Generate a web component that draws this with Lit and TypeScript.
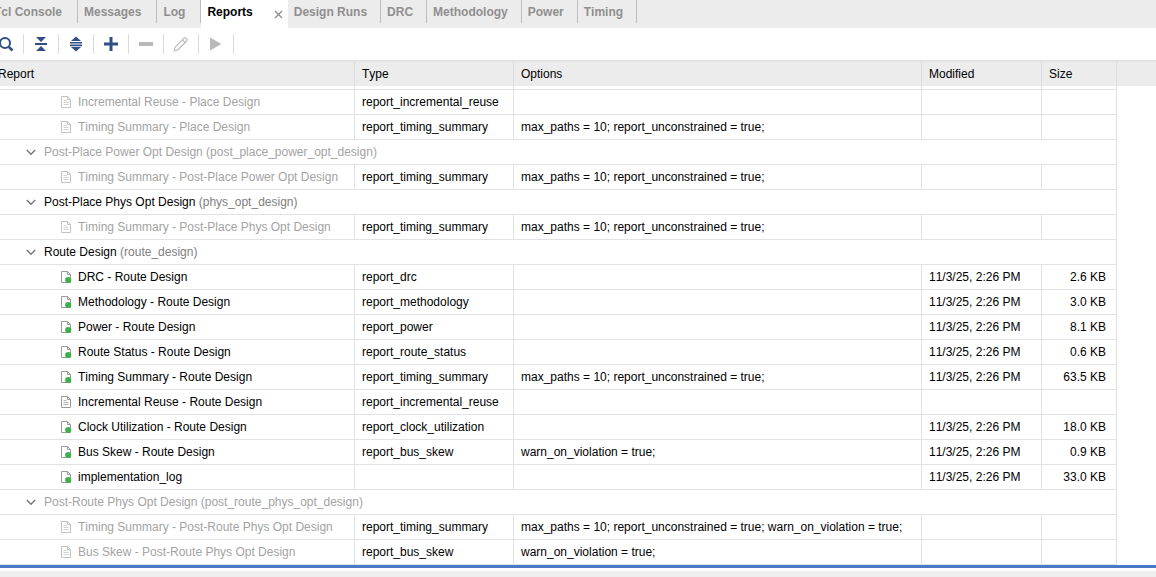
import { LitElement, html, css, svg, nothing } from "lit";
import { customElement, property, state } from "lit/decorators.js";
import { classMap } from "lit/directives/class-map.js";

type Status = "done" | "pending" | "off";

interface Report {
  name: string;
  type: string;
  options?: string;
  modified?: string;
  size?: string;
  status: Status;
}

interface Group {
  name: string;
  step: string;
  off?: boolean;
  reports: Report[];
}

const PATHS = "max_paths = 10; report_unconstrained = true;";
const WARN = "warn_on_violation = true;";
const WHEN = "11/3/25, 2:26 PM";

const done = (name: string, type: string, size: string, options = ""): Report => ({
  name, type, size, options, modified: WHEN, status: "done",
});
const off = (name: string, type: string, options = ""): Report => ({
  name, type, options, status: "off",
});

const LEADING: Report[] = [
  off("Incremental Reuse - Place Design", "report_incremental_reuse"),
  off("Timing Summary - Place Design", "report_timing_summary", PATHS),
];

const GROUPS: Group[] = [
  {
    name: "Post-Place Power Opt Design", step: "post_place_power_opt_design", off: true,
    reports: [off("Timing Summary - Post-Place Power Opt Design", "report_timing_summary", PATHS)],
  },
  {
    name: "Post-Place Phys Opt Design", step: "phys_opt_design",
    reports: [off("Timing Summary - Post-Place Phys Opt Design", "report_timing_summary", PATHS)],
  },
  {
    name: "Route Design", step: "route_design",
    reports: [
      done("DRC - Route Design", "report_drc", "2.6 KB"),
      done("Methodology - Route Design", "report_methodology", "3.0 KB"),
      done("Power - Route Design", "report_power", "8.1 KB"),
      done("Route Status - Route Design", "report_route_status", "0.6 KB"),
      done("Timing Summary - Route Design", "report_timing_summary", "63.5 KB", PATHS),
      { name: "Incremental Reuse - Route Design", type: "report_incremental_reuse", status: "pending" },
      done("Clock Utilization - Route Design", "report_clock_utilization", "18.0 KB"),
      done("Bus Skew - Route Design", "report_bus_skew", "0.9 KB", WARN),
      done("implementation_log", "", "33.0 KB"),
    ],
  },
  {
    name: "Post-Route Phys Opt Design", step: "post_route_phys_opt_design", off: true,
    reports: [
      off("Timing Summary - Post-Route Phys Opt Design", "report_timing_summary", `${PATHS} ${WARN}`),
      off("Bus Skew - Post-Route Phys Opt Design", "report_bus_skew", WARN),
    ],
  },
];

const TOOLS = [
  { label: "Search", art: svg`<circle cx="7" cy="7" r="5" fill="none" stroke="currentColor" stroke-width="2"/><path d="M10.8 10.8 14.5 14.5" stroke="currentColor" stroke-width="2.6"/>` },
  { label: "Collapse all", art: svg`<path d="M3 1h10L8 6zM3 15h10L8 10z" fill="currentColor"/><path d="M2 8h12" stroke="currentColor" stroke-width="2"/>` },
  { label: "Expand all", art: svg`<path d="M3 5 8 .6 13 5zM3 11h10L8 15.4z" fill="currentColor"/><path d="M2 6.7h12M2 9.4h12" stroke="currentColor" stroke-width="1.6"/>` },
  { label: "Add report", art: svg`<path d="M1 8h14M8 1v14" stroke="currentColor" stroke-width="3"/>` },
  { label: "Delete report", disabled: true, art: svg`<path d="M1 8h14" stroke="currentColor" stroke-width="4"/>` },
  { label: "Edit report", disabled: true, art: svg`<path d="M1.2 14.8 2 11.2 11 2.2q1-1 2 0l.8.8q1 1 0 2L4.8 14zM9.4 3.8l2.8 2.8" fill="none" stroke="currentColor" stroke-width="1.2"/>` },
  { label: "Run report", disabled: true, art: svg`<path d="M2 1.4v13.2L13.4 8z" fill="currentColor"/>` },
];

@customElement("tab-strip")
class TabStrip extends LitElement {
  @state() private active = "Reports";

  private tabs = ["Tcl Console", "Messages", "Log", "Reports", "Design Runs", "DRC", "Methodology", "Power", "Timing"];

  static styles = css`
    :host { display: block; background: #ececec; }
    .strip { display: flex; height: 28px; align-items: flex-start; }
    .tab { display: flex; height: 23px; border-right: 1px solid #bdbdbd; }
    .label {
      height: 24px; padding: 0 15px 0 6px; border: 0; background: none;
      font: bold 12px/24px "Liberation Sans", Arial, sans-serif; font-kerning: none;
      color: #8f8f8f; white-space: nowrap;
    }
    .active { height: 28px; border-right: 0; background: #fff; }
    .active .label { color: #000; padding-right: 0; }
    .active ~ .tab .label { padding-right: 13px; }
    .close {
      display: flex; align-items: center; margin-left: 21px; padding: 0 5px 0 0;
      border: 0; background: none; color: #8c8c8c;
    }
    .close svg { display: block; width: 9px; height: 9px; }
  `;

  render() {
    return html`<div class="strip" role="tablist">
      ${this.tabs.map((t) => {
        const on = t === this.active;
        return html`<div class=${classMap({ tab: true, active: on })}>
          <button class="label" role="tab" aria-selected=${on} @click=${() => (this.active = t)}>${t}</button>
          ${on
            ? html`<button class="close" aria-label="Close ${t}">
                <svg viewBox="0 0 9 9"><path d="M1 1l7 7M8 1l-7 7" stroke="currentColor" stroke-width="1.4" /></svg>
              </button>`
            : nothing}
        </div>`;
      })}
    </div>`;
  }
}

@customElement("tool-bar")
class ToolBar extends LitElement {
  static styles = css`
    :host { display: block; background: #fff; }
    .bar { display: flex; align-items: center; height: 32px; padding-left: 1px; }
    .tool {
      display: flex; align-items: center; justify-content: center; box-sizing: border-box;
      width: 35px; height: 20px; padding: 0; border: 0; border-right: 1px solid #dadada;
      background: none; color: #2f4f87;
    }
    .tool:disabled { color: #b9b9b9; }
    .tool svg { width: 16px; height: 16px; }
  `;

  render() {
    return html`<div class="bar" role="toolbar">
      ${TOOLS.map((t) => html`<button class="tool" aria-label=${t.label} ?disabled=${!!t.disabled}>
        <svg viewBox="0 0 16 16">${t.art}</svg>
      </button>`)}
    </div>`;
  }
}

@customElement("doc-icon")
class DocIcon extends LitElement {
  @property() status: Status = "pending";

  static styles = css`
    :host { display: block; color: #9a9a9a; }
    :host([status="off"]) { color: #c2c2c2; }
    svg { display: block; width: 12px; height: 14px; }
  `;

  render() {
    return html`<svg viewBox="0 0 12 14">
      <path d="M1.5 1.5h6l3 3v8h-9zM7.5 1.5v3h3" fill="none" stroke="currentColor" />
      ${this.status === "done"
        ? svg`<circle cx="8.2" cy="10" r="3.1" fill="#3fb04c"/>`
        : svg`<path d="M3.5 5.5h3M3.5 7.5h5M3.5 9.5h5" stroke="currentColor" opacity=".75"/>`}
    </svg>`;
  }
}

@customElement("report-table")
class ReportTable extends LitElement {
  @state() private closed = new Set<string>();

  static styles = css`
    :host { display: block; background: #fff; border-top: 2px solid #e4e4e4; }
    table { width: 100%; table-layout: fixed; border-collapse: separate; border-spacing: 0; }
    .c-report { width: 367px; }
    .c-type { width: 159px; }
    .c-modified { width: 120px; }
    .c-size { width: 75px; }
    .c-rest { width: 39px; }
    th, td {
      box-sizing: border-box; padding: 0 7px; text-align: left; font-weight: normal;
      line-height: 24px; white-space: nowrap; overflow: hidden;
      border-right: 1px solid #e2e2e2;
    }
    th { height: 24px; background: #ececec; border-right-color: #dcdcdc; }
    th:first-child { padding-left: 10px; }
    td { height: 25px; border-bottom: 1px solid #e2e2e2; }
    .rest { border: 0; padding: 0; }
    .cut td { height: 4px; line-height: 0; padding: 0; }
    .size { text-align: right; padding-right: 10px; }
    .leaf, .node { display: flex; align-items: center; }
    .leaf { gap: 6px; padding-left: 65px; }
    .node { gap: 7px; padding-left: 30px; }
    .off, .off .step { color: #a3a3a3; }
    .step { color: #808080; }
    .twist { display: block; width: 12px; height: 12px; padding: 0; border: 0; background: none; color: #757575; }
    .twist svg { display: block; }
    .folded svg { transform: rotate(-90deg); }
  `;

  private toggle(step: string) {
    const next = new Set(this.closed);
    if (!next.delete(step)) next.add(step);
    this.closed = next;
  }

  private row(r: Report) {
    return html`<tr>
      <td><div class=${classMap({ leaf: true, off: r.status === "off" })}>
        <doc-icon status=${r.status}></doc-icon><span>${r.name}</span>
      </div></td>
      <td>${r.type}</td>
      <td>${r.options}</td>
      <td>${r.modified}</td>
      <td class="size">${r.size}</td>
      <td class="rest"></td>
    </tr>`;
  }

  private group(g: Group) {
    const folded = this.closed.has(g.step);
    return html`<tr>
        <td colspan="5"><div class=${classMap({ node: true, off: !!g.off })}>
          <button class=${classMap({ twist: true, folded })} aria-label="Toggle ${g.name}"
            aria-expanded=${!folded} @click=${() => this.toggle(g.step)}>
            <svg width="12" height="12" viewBox="0 0 12 12"><path d="M1.8 4 6 8.2 10.2 4" fill="none" stroke="currentColor" stroke-width="1.4" /></svg>
          </button>
          <span>${g.name} <span class="step">(${g.step})</span></span>
        </div></td>
        <td class="rest"></td>
      </tr>
      ${folded ? nothing : g.reports.map((r) => this.row(r))}`;
  }

  render() {
    return html`<table>
      <colgroup>
        <col class="c-report" /><col class="c-type" /><col /><col class="c-modified" /><col class="c-size" /><col class="c-rest" />
      </colgroup>
      <thead>
        <tr><th>Report</th><th>Type</th><th>Options</th><th>Modified</th><th>Size</th><th class="rest"></th></tr>
      </thead>
      <tbody>
        <tr class="cut"><td></td><td></td><td></td><td></td><td></td><td class="rest"></td></tr>
        ${LEADING.map((r) => this.row(r))}
        ${GROUPS.map((g) => this.group(g))}
      </tbody>
    </table>`;
  }
}

@customElement("app-root")
class AppRoot extends LitElement {
  static styles = css`
    :host {
      display: block; overflow: hidden; min-height: 100vh; background: #eee;
      font: 12px/24px "Liberation Sans", Arial, sans-serif; font-kerning: none; color: #000;
    }
    .panel { margin-left: -12px; background: #fff; padding-bottom: 3px; }
    .focus { border-bottom: 3px solid #4a78c8; }
  `;

  render() {
    return html`<main class="panel">
      <div class="focus">
        <tab-strip></tab-strip>
        <tool-bar></tool-bar>
        <report-table></report-table>
      </div>
    </main>`;
  }
}
